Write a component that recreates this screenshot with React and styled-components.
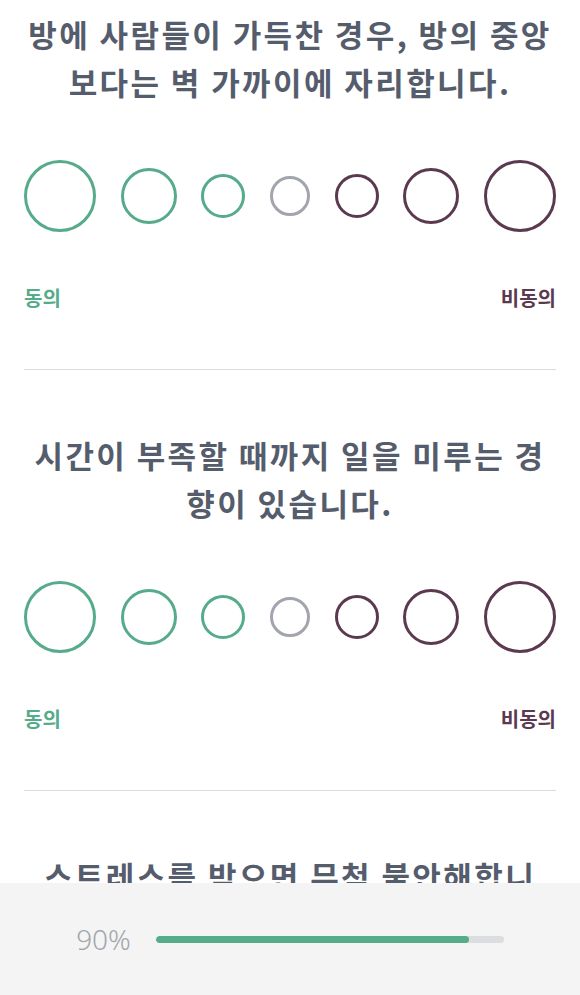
import React from "react";
import styled, { createGlobalStyle } from "styled-components";

const GlobalStyle = createGlobalStyle`
  html, body {
    margin: 0;
    padding: 0;
    background: #ffffff;
  }

  body {
    font-family: "Noto Sans CJK KR", "Noto Sans", sans-serif;
    overflow: hidden;
  }
`;

const GREEN = "#56ab8a";
const PURPLE = "#5b3a4f";
const NEUTRAL = "#a3a5ae";

const Page = styled.main`
  padding: 0 24px 160px;
`;

const Section = styled.section`
  padding-top: ${(props) => (props.$first ? "10px" : "61px")};
  padding-bottom: 59px;
  border-bottom: 1px solid #dcdcdc;
`;

const Question = styled.h2`
  margin: 0;
  font-size: 31px;
  font-weight: 700;
  line-height: 48px;
  letter-spacing: 2.4px;
  text-align: center;
  color: #555d6d;
`;

const Scale = styled.div`
  display: flex;
  justify-content: space-between;
  align-items: center;
  height: 72px;
  margin-top: 54px;
`;

const Option = styled.button`
  box-sizing: border-box;
  width: ${(props) => props.$size}px;
  height: ${(props) => props.$size}px;
  padding: 0;
  border: 3px solid ${(props) => props.$color};
  border-radius: 50%;
  background: transparent;
  cursor: pointer;
`;

const Labels = styled.div`
  display: flex;
  justify-content: space-between;
  margin-top: 54px;
  font-size: 20px;
  font-weight: 700;
  line-height: 24px;
`;

const Label = styled.span`
  color: ${(props) => props.$color};
`;

const Footer = styled.footer`
  position: fixed;
  left: 0;
  right: 0;
  bottom: 0;
  height: 112px;
  background: #f4f4f4;
  display: flex;
  justify-content: center;
  align-items: center;
  gap: 25px;
`;

const Percent = styled.span`
  font-family: "Noto Sans", sans-serif;
  font-size: 28px;
  font-weight: 300;
  color: #a3a6ae;
  line-height: 1;
`;

const Track = styled.div`
  width: 348px;
  height: 7px;
  border-radius: 4px;
  background: #dcdde0;
  overflow: hidden;
`;

const Fill = styled.div`
  height: 100%;
  border-radius: 4px;
  background: ${GREEN};
`;

const options = [
  { size: 72, color: GREEN },
  { size: 56, color: GREEN },
  { size: 44, color: GREEN },
  { size: 40, color: NEUTRAL },
  { size: 44, color: PURPLE },
  { size: 56, color: PURPLE },
  { size: 72, color: PURPLE },
];

const questions = [
  "방에 사람들이 가득찬 경우, 방의 중앙보다는 벽 가까이에 자리합니다.",
  "시간이 부족할 때까지 일을 미루는 경향이 있습니다.",
  "스트레스를 받으면 무척 불안해합니다.",
];

const QuestionBlock = ({ text, first }) => (
  <Section $first={first}>
    <Question>{text}</Question>
    <Scale>
      {options.map((o, i) => (
        <Option key={i} $size={o.size} $color={o.color} aria-label={`option ${i + 1}`} />
      ))}
    </Scale>
    <Labels>
      <Label $color={GREEN}>동의</Label>
      <Label $color={PURPLE}>비동의</Label>
    </Labels>
  </Section>
);

const App = () => {
  const progress = 90;
  return (
    <>
      <GlobalStyle />
      <Page>
        {questions.map((q, i) => (
          <QuestionBlock key={i} text={q} first={i === 0} />
        ))}
      </Page>
      <Footer>
        <Percent>{progress}%</Percent>
        <Track>
          <Fill style={{ width: `${progress}%` }} />
        </Track>
      </Footer>
    </>
  );
};

export default App;
